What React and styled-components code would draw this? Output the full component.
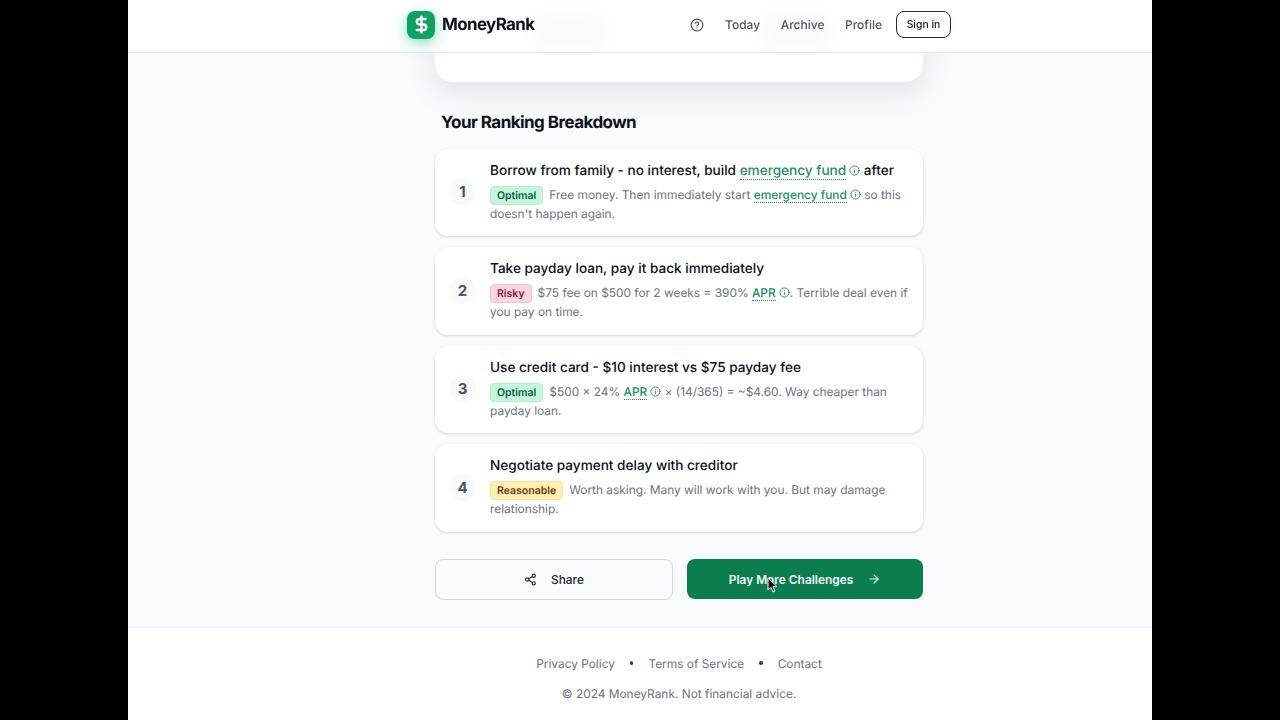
import React from "react";
import styled, { createGlobalStyle } from "styled-components";
import { ArrowRight, CircleHelp, DollarSign, Info, Share2 } from "lucide-react";

const Global = createGlobalStyle`
  html, body { margin: 0; padding: 0; background: #000; }
  body { font-family: Inter, "Liberation Sans", sans-serif; text-rendering: geometricPrecision; }
  * { box-sizing: border-box; }
`;

const Page = styled.div`
  position: relative;
  width: 1024px;
  height: 720px;
  margin: 0 auto;
  background: #f8fafc;
  overflow: hidden;
  display: flex;
  flex-direction: column;
`;

const Header = styled.header`
  position: absolute;
  top: 0;
  left: 0;
  right: 0;
  height: 53px;
  z-index: 5;
  background: rgba(255, 255, 255, 0.9);
  backdrop-filter: blur(12px);
  border-bottom: 1px solid #e2e8f0;
  display: flex;
  align-items: center;
  padding: 0 201px 3px 279px;
`;

const Brand = styled.div`
  display: flex;
  align-items: center;
  gap: 7px;
  margin-right: auto;
`;

const LogoMark = styled.div`
  width: 28px;
  height: 28px;
  border-radius: 8px;
  background: #10a160;
  color: #fff;
  display: flex;
  align-items: center;
  justify-content: center;
  box-shadow: 0 4px 14px rgba(34, 197, 120, 0.55);
`;

const BrandName = styled.span`
  font-size: 17px;
  font-weight: 700;
  letter-spacing: -0.65px;
  color: #0b1220;
`;

const Nav = styled.nav`
  display: flex;
  align-items: center;
`;

const HelpIcon = styled(CircleHelp)`
  color: #4b5563;
  margin-right: 21.5px;
`;

const NavLink = styled.a`
  font-size: 12px;
  font-weight: 500;
  color: #4b5563;
  margin-right: ${(p) => (p.$last ? 14 : 20.5)}px;
`;

const SignIn = styled.button`
  width: 55px;
  height: 27px;
  border: 1.3px solid #1f2937;
  border-radius: 8px;
  background: #fff;
  color: #0f172a;
  font: 500 10.4px Inter, sans-serif;
  padding: 0;
`;

const Main = styled.main`
  width: 488px;
  margin-left: 307px;
  flex: 1;
`;

const ResultCard = styled.div`
  height: 82px;
  background: #fff;
  border-radius: 0 0 18px 18px;
  box-shadow: 0 10px 28px rgba(100, 116, 160, 0.16);
  padding: 18px 92px 0 100px;
  display: flex;
  justify-content: space-between;
`;

// only ever seen blurred through the header
const StatBlock = styled.div`
  width: ${(p) => p.$w}px;
  height: 26px;
  background: #a8b2c0;
  border-radius: 4px;
`;

const SectionTitle = styled.h2`
  margin: 31px 0 15.5px 6px;
  height: 20px;
  font-size: 17px;
  line-height: 20px;
  font-weight: 700;
  letter-spacing: -0.55px;
  color: #0b1220;
`;

const RankList = styled.div`
  display: flex;
  flex-direction: column;
  gap: 11px;
`;

const RankCard = styled.article`
  height: 87.5px;
  background: #fff;
  border-radius: 13px;
  box-shadow: 0 1px 3px rgba(15, 23, 42, 0.16);
  padding: 11px 14px 0 14px;
  display: flex;
  align-items: flex-start;
`;

const RankNumber = styled.div`
  flex: none;
  width: 27px;
  height: 27px;
  margin-top: 18.5px;
  margin-right: 14px;
  border-radius: 50%;
  background: #f7f9fb;
  color: #475569;
  font-size: 15px;
  font-weight: 700;
  display: flex;
  align-items: center;
  justify-content: center;
`;

const RankBody = styled.div`
  flex: 1;
  min-width: 0;
`;

const RankTitle = styled.h3`
  margin: 0 0 3px;
  font-size: 13.6px;
  line-height: 23px;
  font-weight: 500;
  color: #0b0f19;
`;

const RankText = styled.p`
  margin: 0;
  font-size: 11.9px;
  line-height: 18.5px;
  color: #6b7280;
`;

const badgeColors = {
  optimal: { bg: "#c6f6d9", border: "#b0f0ca", fg: "#065f46" },
  risky: { bg: "#fbd5df", border: "#f8c0ce", fg: "#9f1239" },
  reasonable: { bg: "#fdf0b5", border: "#fbe38e", fg: "#78350f" },
};

const Badge = styled.span`
  display: inline-block;
  height: 19px;
  padding: 0 6px;
  margin-right: 6px;
  border: 1px solid ${(p) => badgeColors[p.$kind].border};
  border-radius: 4px;
  background: ${(p) => badgeColors[p.$kind].bg};
  color: ${(p) => badgeColors[p.$kind].fg};
  font-size: 10.5px;
  font-weight: 600;
  line-height: 18px;
  vertical-align: top;
`;

const Term = styled.span`
  color: #1b8e63;
  font-weight: 500;
  border-bottom: 1px dotted #1b8e63;
`;

const TermIcon = styled(Info)`
  color: #1b8e63;
  vertical-align: -1px;
  margin-left: 3px;
`;

const Actions = styled.div`
  display: flex;
  gap: 14px;
  margin-top: 27.5px;
`;

const ShareButton = styled.button`
  flex: 0 0 238px;
  height: 41px;
  border: 1.5px solid #d3dae2;
  border-radius: 8px;
  background: #f8fafc;
  color: #1f2937;
  font: 500 11.9px Inter, sans-serif;
  display: flex;
  align-items: center;
  justify-content: center;
  gap: 14px;
`;

const PlayButton = styled.button`
  flex: 1;
  height: 40px;
  border: none;
  border-radius: 8px;
  background: #0c7d4e;
  color: #f2fbf6;
  font: 600 11.9px Inter, sans-serif;
  display: flex;
  align-items: center;
  justify-content: center;
  gap: 14px;
`;

const Footer = styled.footer`
  height: 94px;
  background: #fff;
  border-top: 2px solid #f1f4f8;
  display: flex;
  flex-direction: column;
  align-items: center;
  padding: 26px 0 0 78px;
  color: #6b7280;
  font-size: 11.9px;
`;

const FooterLinks = styled.div`
  display: flex;
  align-items: center;
  gap: 15px;
  height: 18px;
`;

const Dot = styled.span`
  width: 3.5px;
  height: 3.5px;
  border-radius: 50%;
  background: #374151;
`;

const Copyright = styled.div`
  margin-top: 13px;
  line-height: 18px;
`;

const Cursor = styled.svg`
  position: absolute;
  left: 639px;
  top: 577px;
  z-index: 6;
`;

const ranks = [
  {
    title: <>Borrow from family - no interest, build <Term>emergency fund</Term><TermIcon size={11} /> after</>,
    kind: "optimal",
    label: "Optimal",
    text: <>Free money. Then immediately start <Term>emergency fund</Term><TermIcon size={11} /> so this doesn't happen again.</>,
  },
  {
    title: "Take payday loan, pay it back immediately",
    kind: "risky",
    label: "Risky",
    text: <>$75 fee on $500 for 2 weeks = 390% <Term>APR</Term><TermIcon size={11} />. Terrible deal even if you pay on time.</>,
  },
  {
    title: "Use credit card - $10 interest vs $75 payday fee",
    kind: "optimal",
    label: "Optimal",
    text: <>$500 × 24% <Term>APR</Term><TermIcon size={11} /> × (14/365) = ~$4.60. Way cheaper than payday loan.</>,
  },
  {
    title: "Negotiate payment delay with creditor",
    kind: "reasonable",
    label: "Reasonable",
    text: "Worth asking. Many will work with you. But may damage relationship.",
  },
];

export default function App() {
  return (
    <Page>
      <Global />
      <Header>
        <Brand>
          <LogoMark><DollarSign size={19} strokeWidth={3} /></LogoMark>
          <BrandName>MoneyRank</BrandName>
        </Brand>
        <Nav>
          <HelpIcon size={14} />
          <NavLink>Today</NavLink>
          <NavLink>Archive</NavLink>
          <NavLink $last>Profile</NavLink>
          <SignIn>Sign in</SignIn>
        </Nav>
      </Header>
      <Main>
        <ResultCard>
          <StatBlock $w={70} />
          <StatBlock $w={70} />
        </ResultCard>
        <SectionTitle>Your Ranking Breakdown</SectionTitle>
        <RankList>
          {ranks.map((r, i) => (
            <RankCard key={i}>
              <RankNumber>{i + 1}</RankNumber>
              <RankBody>
                <RankTitle>{r.title}</RankTitle>
                <RankText><Badge $kind={r.kind}>{r.label}</Badge>{r.text}</RankText>
              </RankBody>
            </RankCard>
          ))}
        </RankList>
        <Actions>
          <ShareButton><Share2 size={13} />Share</ShareButton>
          <PlayButton>Play More Challenges<ArrowRight size={14} /></PlayButton>
        </Actions>
      </Main>
      <Footer>
        <FooterLinks>
          <span>Privacy Policy</span><Dot />
          <span>Terms of Service</span><Dot />
          <span>Contact</span>
        </FooterLinks>
        <Copyright>© 2024 MoneyRank. Not financial advice.</Copyright>
      </Footer>
      <Cursor width="11" height="16" viewBox="0 0 11 16">
        <path d="M1 1v12l3-2.6L6 15l2-1-2-4.4h4z" fill="#111" stroke="#fff" strokeWidth="1" />
      </Cursor>
    </Page>
  );
}
